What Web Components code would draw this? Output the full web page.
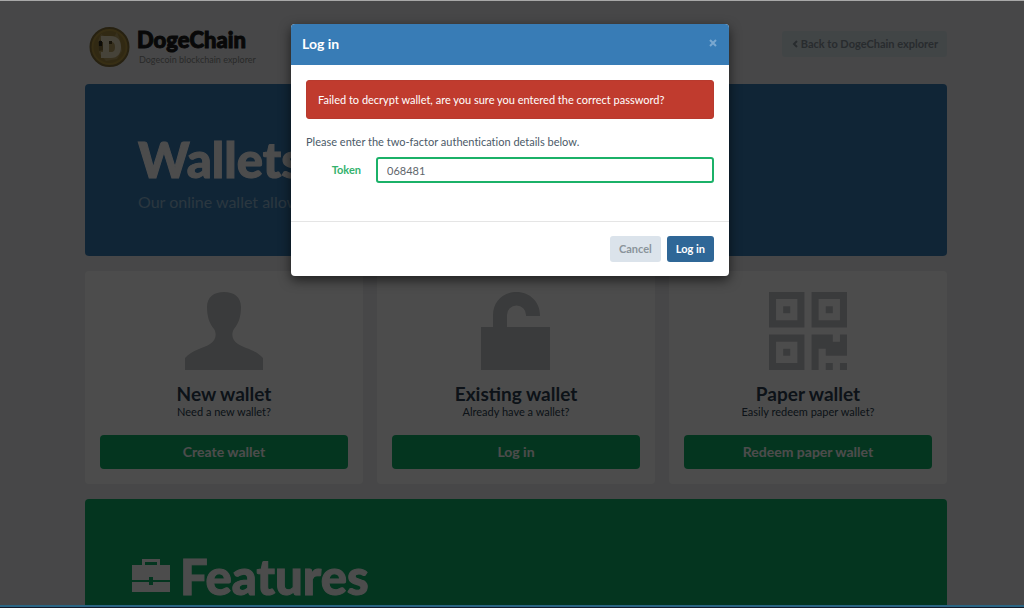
<!DOCTYPE html>
<html lang="en">
<head>
<meta charset="utf-8">
<title>DogeChain Wallets</title>
<style>
  body { margin: 0; font: 11px/16px Lato, "Open Sans", sans-serif; color: #2c3e50; }
</style>
</head>
<body>
<wallet-app>
  <site-header></site-header>
  <hero-banner tone="blue">
    <span slot="title">Wallets</span>
    <span slot="text">Our online wallet allows</span>
  </hero-banner>
  <card-row>
    <wallet-card>
      <svg slot="icon" viewBox="0 0 78 78" width="78" height="78" aria-hidden="true"><path fill="#c3c6c8" d="M39 0C49 0 56 5 56 15C56 24 54 31 49 37C46 42 47 48 53 52C59 56 71 58 78 66V78H0V66C7 58 19 56 25 52C31 48 32 42 29 37C24 31 22 24 22 15C22 5 29 0 39 0Z"/></svg>
      <span slot="title">New wallet</span><span slot="text">Need a new wallet?</span><span slot="action">Create wallet</span>
    </wallet-card>
    <wallet-card>
      <svg slot="icon" viewBox="0 0 78 78" width="78" height="78" aria-hidden="true"><path fill="#c3c6c8" d="M4 35H16V23C16 10 26 0 39.500 0S63 10 63 23V24H49V23A9.500 9.500 0 0 0 30 23V35H73V78H4Z"/></svg>
      <span slot="title">Existing wallet</span><span slot="text">Already have a wallet?</span><span slot="action">Log in</span>
    </wallet-card>
    <wallet-card>
      <svg slot="icon" viewBox="0 0 11 11" width="78" height="78" aria-hidden="true"><path fill="#c3c6c8" fill-rule="evenodd" d="M0 0h5v5H0zM1 1v3h3V1zM2 2h1v1H2zM6 0h5v5H6zM7 1v3h3V1zM8 2h1v1H8zM0 6h5v5H0zM1 7v3h3V7zM2 8h1v1H2zM6 6h3v1h1V6h1v3H8V8H7v3H6zM8 10h1v1H8zM10 10h1v1h-1z"/></svg>
      <span slot="title">Paper wallet</span><span slot="text">Easily redeem paper wallet?</span><span slot="action">Redeem paper wallet</span>
    </wallet-card>
  </card-row>
  <hero-banner tone="green">
    <svg slot="icon" viewBox="0 0 38 34" width="38" height="34" aria-hidden="true"><path fill="#fff" fill-rule="evenodd" d="M10 6V0H28V6H38V21H21V18H17V21H0V6ZM13 3V6H25V3ZM0 23H17V26H21V23H38V33H0Z"/></svg>
    <span slot="title">Features</span>
  </hero-banner>
  <login-dialog slot="overlay"></login-dialog>
</wallet-app>

<script>
  const define = (name, html) => {
    const template = document.createElement('template');
    template.innerHTML = '<style>*{box-sizing:border-box}:host{font-variant-ligatures:none}</style>' + html;
    customElements.define(name, class extends HTMLElement {
      constructor() {
        super();
        this.attachShadow({ mode: 'open' }).append(template.content.cloneNode(true));
      }
    });
  };

  define('wallet-app', `
    <style>
      :host { display: flex; flex-direction: column; height: 100vh; background: #131b29;
              border-top: 1px solid #a8a8a8; border-bottom: 1px solid #131b29; box-sizing: border-box; }
      .view { position: relative; flex: 1; min-height: 0; overflow: hidden; background: #edeff1;
              border-bottom: 2px solid #2b6584; }
      main { display: flex; flex-direction: column; gap: 15px; padding: 26px 77px 0 85px; }
    </style>
    <div class="view"><main><slot></slot></main><slot name="overlay"></slot></div>`);

  define('site-header', `
    <style>
      :host { display: flex; justify-content: space-between; align-items: flex-start; height: 42px; padding-left: 4px; }
      .brand { display: flex; gap: 7px; color: inherit; text-decoration: none; }
      .name { display: block; font: 900 22px/26px Lato, sans-serif; color: #1c1c1c; -webkit-text-stroke: 1px currentColor; }
      .tag { display: block; font-size: 9px; line-height: 14px; color: #8c8c8c; padding-left: 2px; }
      button { display: flex; align-items: center; gap: 3px; height: 26px; margin-top: 4px; padding: 0 9px 0 10px; border: 0;
               border-radius: 3px; background: #dbe6ec; color: #88939b; font: bold 11px/16px Lato, sans-serif; }
    </style>
    <a class="brand" href="#">
      <svg width="41" height="41" viewBox="0 0 41 41" aria-hidden="true">
        <circle cx="20.500" cy="20" r="19" fill="#b89a45" stroke="#83703a" stroke-width="2"/>
        <circle cx="20.500" cy="20" r="16" fill="#a38a42"/>
        <path d="M9 14L12 7L17 10H25L28 5L31 13L33 24L28 32L17 34L10 26Z" fill="#b7a062"/>
        <path d="M9 15L15 10L18 15L15 23L10 24Z" fill="#84713a"/>
        <path fill="#eadfc0" fill-rule="evenodd" d="M12 9H22C29 9 32 14 32 20C32 26 29 31 22 31H12V25H14V15H12V9ZM20 15V25H22C25 25 26 23 26 20C26 17 25 15 22 15Z"/>
        <path d="M10 14h3v5h-3z" fill="#292719"/><path d="M20 14h3v3h-3z" fill="#50431f"/>
      </svg>
      <span><span class="name">DogeChain</span><span class="tag">Dogecoin blockchain explorer</span></span>
    </a>
    <button type="button"><svg width="6" height="8" viewBox="0 0 6 8" aria-hidden="true"><path d="M5 1L2 4L5 7" fill="none" stroke="currentColor" stroke-width="2"/></svg>Back to DogeChain explorer</button>`);

  define('hero-banner', `
    <style>
      :host { display: block; min-height: 172px; padding: 47px 53px 42px; border-radius: 4px; color: #fff; background: #387cb6; box-sizing: border-box; }
      :host([tone="green"]) { background: #0fb268; padding: 49px 47px 42px; }
      h1 { display: flex; align-items: center; gap: 10px; margin: 0 0 3px; font: 900 49px/56px Lato, sans-serif; -webkit-text-stroke: 1px currentColor; }
      p { margin: 0; font-size: 16px; line-height: 24px; color: #8fb8d4; }
    </style>
    <h1><slot name="icon"></slot><slot name="title"></slot></h1>
    <p><slot name="text"></slot></p>`);

  define('card-row', `
    <style>
      :host { display: grid; grid-template-columns: repeat(3, 1fr); gap: 14px; }
    </style><slot></slot>`);

  define('wallet-card', `
    <style>
      :host { display: flex; flex-direction: column; padding: 21px 15px 15px; border-radius: 4px; background: #fff; text-align: center; }
      .icon { display: flex; justify-content: center; margin-bottom: 13px; }
      h2 { margin: 0; font: bold 19px/22px Lato, sans-serif; }
      p { margin: 0 0 16px; font-size: 11px; line-height: 14px; }
      button { height: 34px; border: 0; border-radius: 4px; background: #0fb268; color: #fff; font: bold 14px/20px Lato, sans-serif; }
    </style>
    <div class="icon"><slot name="icon"></slot></div>
    <h2><slot name="title"></slot></h2>
    <p><slot name="text"></slot></p>
    <button type="button"><slot name="action"></slot></button>`);

  define('login-dialog', `
    <style>
      :host { position: absolute; inset: 0; display: flex; justify-content: center; align-items: flex-start;
              padding: 23px 20px 0 16px; background: rgba(0,0,0,.7); box-sizing: border-box; }
      form { width: 100%; max-width: 438px; border-radius: 4px; overflow: hidden; background: #fff; box-shadow: 0 4px 12px rgba(0,0,0,.6); }
      header { display: flex; justify-content: space-between; align-items: flex-start; height: 41px; padding: 10px 11px; background: #387cb6; color: #fff; }
      h2 { margin: 0; font: bold 14px/20px Lato, sans-serif; }
      button { border: 0; font: bold 11px/16px Lato, sans-serif; }
      .close { display: flex; padding: 4px 0; background: none; color: #7aa8d0; }
      .body { padding: 15px 15px 38px; }
      .alert { padding: 10px 11px; border: 1px solid #b83a2e; border-radius: 3px; background: #c03b2e; color: #fff; line-height: 17px; }
      p { margin: 15px 0 7px; color: #4b5a68; }
      .field { display: grid; grid-template-columns: 55px 1fr; gap: 15px; align-items: center; }
      label { text-align: right; font-weight: bold; color: #34b26d; }
      input { width: 100%; height: 26px; padding: 0 9px; border: 2px solid #1bb168; border-radius: 3px; outline: 0; background: #fff;
              color: #5f666c; font: 11px/16px Lato, sans-serif; }
      footer { display: flex; justify-content: flex-end; gap: 6px; padding: 14px 15px; border-top: 1px solid #e5e5e5; }
      footer button { height: 26px; padding: 0 9px; border-radius: 3px; background: #dbe3eb; color: #8a949b; }
      footer .primary { background: #2f6797; color: #fff; }
    </style>
    <form role="dialog" aria-labelledby="heading">
      <header><h2 id="heading">Log in</h2>
        <button class="close" type="button" aria-label="Close"><svg width="10" height="10" viewBox="0 0 10 10"><path d="M2 2L8 8M8 2L2 8" stroke="currentColor" stroke-width="2"/></svg></button></header>
      <div class="body">
        <div class="alert" role="alert">Failed to decrypt wallet, are you sure you entered the correct password?</div>
        <p>Please enter the two-factor authentication details below.</p>
        <div class="field"><label for="token">Token</label><input id="token" type="text" value="068481"></div>
      </div>
      <footer><button type="button">Cancel</button><button class="primary" type="button">Log in</button></footer>
    </form>`);
</script>
</body>
</html>
